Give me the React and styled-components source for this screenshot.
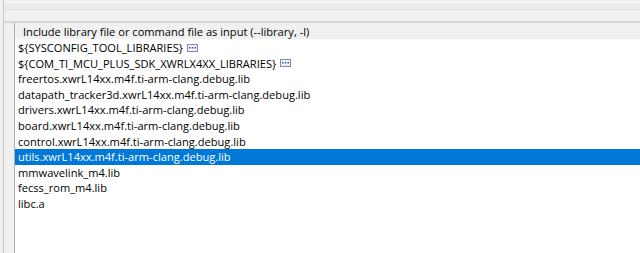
import styled, { createGlobalStyle } from "styled-components";

const GlobalStyle = createGlobalStyle`
  html, body {
    margin: 0;
    padding: 0;
    background: #f0f0f0;
  }
  body {
    font-family: "Open Sans", "Noto Sans", sans-serif;
    font-size: 11.1px;
    color: #000;
  }
`;

const Page = styled.div`
  width: 640px;
  height: 253px;
  overflow: hidden;
  background: #f0f0f0;
`;

const Frame = styled.div`
  margin-left: 3px;
  height: 100%;
  border-left: 1px solid #c9c9c9;
  display: flex;
  flex-direction: column;
`;

const TopBand = styled.div`
  height: 6px;
  margin-top: 2px;
  border-top: 1px solid #fbfbfb;
  border-bottom: 1px solid #e0e0e0;
  background: #ececec;
`;

const Spacer = styled.div`
  height: 11px;
  border-bottom: 2px solid #d6d6dc;
`;

const ListBox = styled.div`
  margin-left: 10px;
  flex: 1;
  display: flex;
  flex-direction: column;
  border-left: 1px solid #adadad;
  background: #fff;
`;

const Header = styled.div`
  height: 16px;
  line-height: 17px;
  padding-left: 8px;
  background: #f0f0f0;
  border-bottom: 1px solid #fafafa;
  white-space: nowrap;
`;

const Rows = styled.div`
  display: flex;
  flex-direction: column;
`;

const Row = styled.div`
  height: 15.6px;
  line-height: 15.6px;
  padding-left: 3px;
  display: flex;
  align-items: center;
  white-space: nowrap;
  background: ${(p) => (p.selected ? "#0078d7" : "transparent")};
  color: ${(p) => (p.selected ? "#fff" : "#000")};
`;

const Dots = styled.svg`
  margin-left: 4px;
  flex: none;
`;

const VarIcon = () => (
  <Dots width="11" height="8" viewBox="0 0 11 8">
    <rect x="0.5" y="0.5" width="10" height="7" fill="#eef3fb" stroke="#8c8c96" />
    <rect x="2" y="3" width="1.5" height="1.5" fill="#3c5a9a" />
    <rect x="4.75" y="3" width="1.5" height="1.5" fill="#3c5a9a" />
    <rect x="7.5" y="3" width="1.5" height="1.5" fill="#3c5a9a" />
  </Dots>
);

const items = [
  { name: "${SYSCONFIG_TOOL_LIBRARIES}", icon: true },
  { name: "${COM_TI_MCU_PLUS_SDK_XWRLX4XX_LIBRARIES}", icon: true },
  { name: "freertos.xwrL14xx.m4f.ti-arm-clang.debug.lib" },
  { name: "datapath_tracker3d.xwrL14xx.m4f.ti-arm-clang.debug.lib" },
  { name: "drivers.xwrL14xx.m4f.ti-arm-clang.debug.lib" },
  { name: "board.xwrL14xx.m4f.ti-arm-clang.debug.lib" },
  { name: "control.xwrL14xx.m4f.ti-arm-clang.debug.lib" },
  { name: "utils.xwrL14xx.m4f.ti-arm-clang.debug.lib", selected: true },
  { name: "mmwavelink_m4.lib" },
  { name: "fecss_rom_m4.lib" },
  { name: "libc.a" },
];

const App = () => {
  return (
    <>
      <GlobalStyle />
      <Page>
        <Frame>
          <TopBand />
          <Spacer />
          <ListBox>
            <Header>Include library file or command file as input (--library, -l)</Header>
            <Rows>
              {items.map((item) => (
                <Row key={item.name} selected={item.selected}>
                  {item.name}
                  {item.icon && <VarIcon />}
                </Row>
              ))}
            </Rows>
          </ListBox>
        </Frame>
      </Page>
    </>
  );
};

export default App;
